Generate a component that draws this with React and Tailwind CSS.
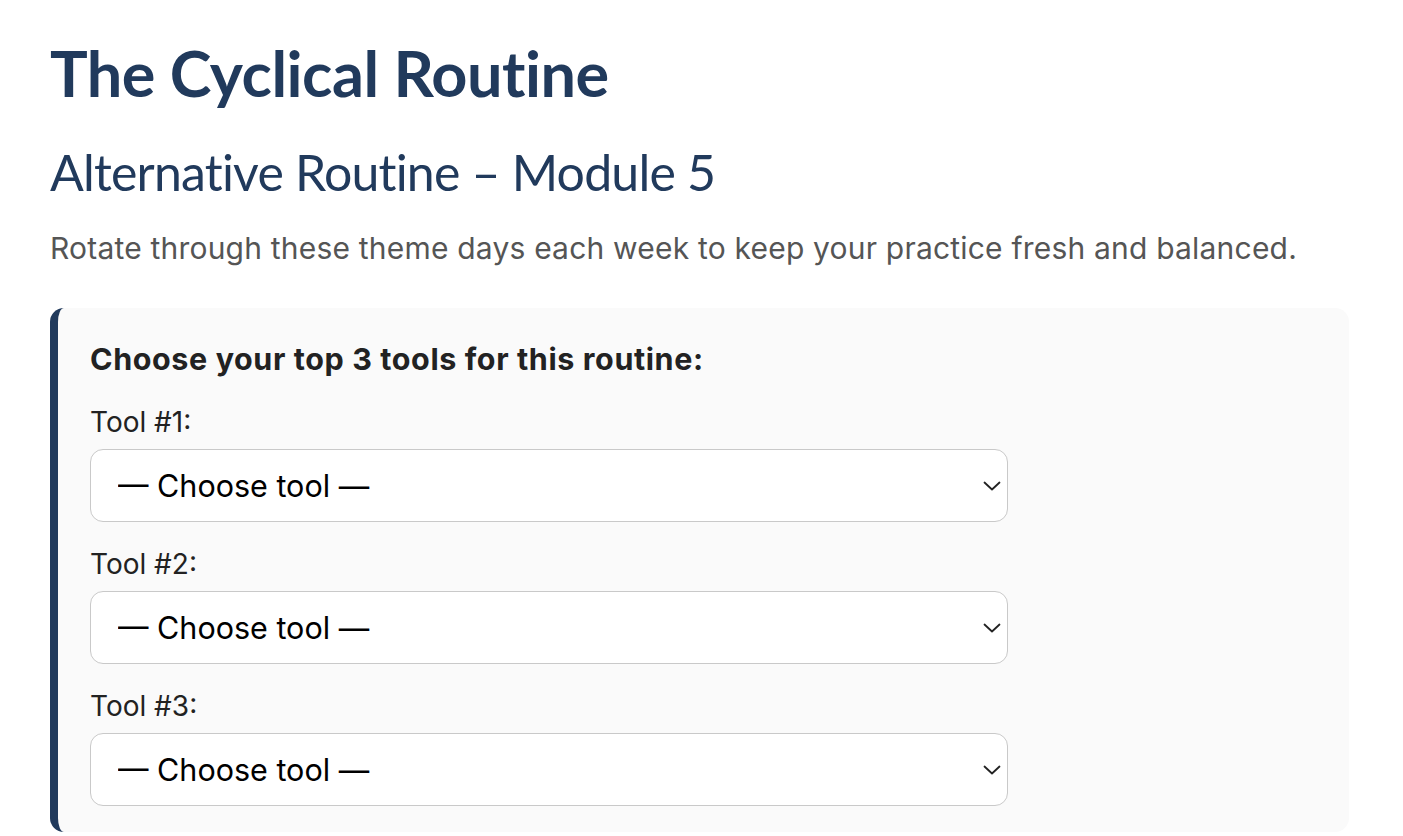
import React from "react";

const Chevron = () => (
  <svg width="18" height="10" viewBox="0 0 18 10" className="pointer-events-none absolute right-[7px] top-1/2 -translate-y-1/2" fill="none">
    <path d="M1.5 1.5 L9 8.5 L16.5 1.5" stroke="#222" strokeWidth="1.8" strokeLinecap="round" strokeLinejoin="round" />
  </svg>
);

function ToolSelect({ label, first }) {
  return (
    <div className={first ? "" : "mt-[22px]"}>
      <div className="text-[28px] leading-[40px] text-[#222]">{label}</div>
      <div className="relative mt-[7px] w-[918px]">
        <select
          defaultValue=""
          className="h-[73px] w-full appearance-none rounded-[13px] border-[1.5px] border-[#c9c9c9] bg-white pl-[27px] pr-[40px] text-[30.5px] text-black outline-none"
          style={{ fontFamily: "Inter, 'Noto Sans', sans-serif" }}
        >
          <option value="">— Choose tool —</option>
          <option>Journaling</option>
          <option>Meditation</option>
          <option>Breathwork</option>
        </select>
        <Chevron />
      </div>
    </div>
  );
}

export default function App() {
  return (
    <div className="min-h-screen bg-white pl-[50px] pr-[54px] pt-[35px]" style={{ fontFamily: "Inter, 'Noto Sans', sans-serif" }}>
      <h1
        className="text-[63px] font-bold leading-[76px] tracking-[-0.5px] text-[#213a5c] [font-variant-ligatures:none]"
        style={{ fontFamily: "Lato, 'Noto Sans', sans-serif" }}
      >
        The Cyclical Routine
      </h1>
      <h2
        className="mt-[31px] text-[50px] font-normal leading-[60px] tracking-[-0.8px] text-[#213a5c] [font-variant-ligatures:none]"
        style={{ fontFamily: "Lato, 'Noto Sans', sans-serif" }}
      >
        Alternative Routine – Module 5
      </h2>
      <p className="mt-[24px] text-[30px] leading-[45px] tracking-[0.2px] text-[#555]">
        Rotate through these theme days each week to keep your practice fresh and balanced.
      </p>
      <div className="mt-[37px] rounded-[14px] border-l-[8px] border-[#213a5c] bg-[#fafafa] pb-[26px] pl-[32px] pr-[32px] pt-[28px]">
        <div className="mb-[21px] text-[30.5px] font-bold leading-[45px] tracking-[0.6px] text-[#222]">
          Choose your top 3 tools for this routine:
        </div>
        <ToolSelect label="Tool #1:" first />
        <ToolSelect label="Tool #2:" />
        <ToolSelect label="Tool #3:" />
      </div>
    </div>
  );
}
